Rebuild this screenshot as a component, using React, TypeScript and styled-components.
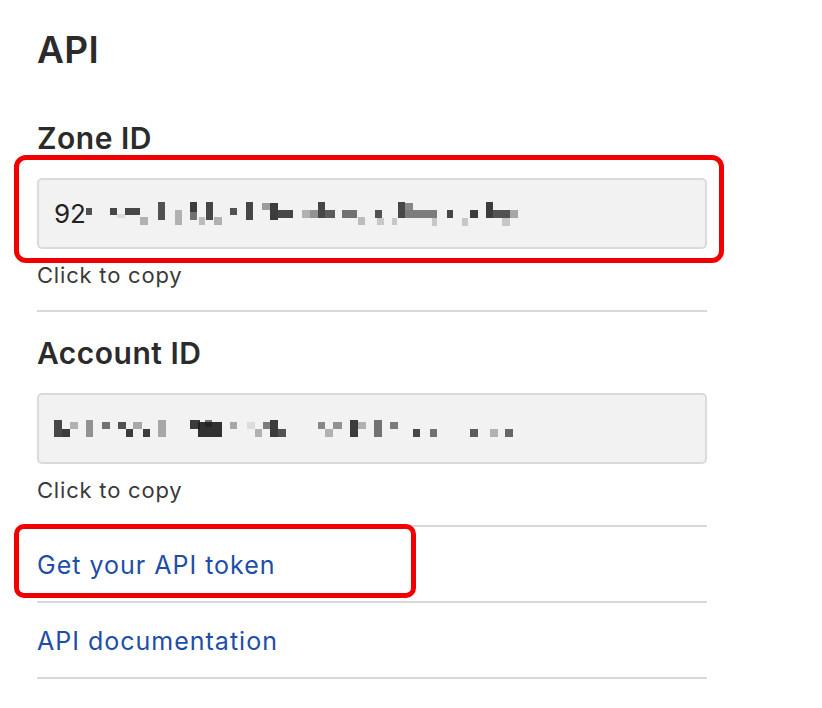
import React from "react";
import styled, { createGlobalStyle } from "styled-components";

const Global = createGlobalStyle`
  html, body { margin: 0; padding: 0; background: #ffffff; }
  body { font-family: Inter, "Noto Sans", "Liberation Sans", sans-serif; color: #2b2b2b; }
  *, *::before, *::after { box-sizing: border-box; }
`;

const Page = styled.main`
  width: 670px;
  margin-left: 37px;
  padding-top: 28px;
  display: flex;
  flex-direction: column;
`;

const Title = styled.h1`
  margin: 0;
  font-size: 37px;
  line-height: 44px;
  font-weight: 600;
  letter-spacing: 0.3px;
  color: #2b2b2b;
`;

const Section = styled.section<{ $first?: boolean }>`
  display: flex;
  flex-direction: column;
  padding-top: ${(p) => (p.$first ? "48px" : "23px")};
  padding-bottom: 21px;
  border-bottom: 2px solid #d8d8d8;
`;

const Label = styled.h2`
  margin: 0 0 22px;
  font-size: 30px;
  line-height: 36px;
  font-weight: 600;
  letter-spacing: 0.5px;
  color: #2b2b2b;
`;

const FieldWrap = styled.div<{ $highlight?: boolean }>`
  position: relative;
  ${(p) =>
    p.$highlight &&
    `
    &::after {
      content: "";
      position: absolute;
      left: -23px;
      right: -17px;
      top: -23px;
      bottom: -14px;
      border: 5px solid #f20000;
      border-radius: 12px;
      pointer-events: none;
    }
  `}
`;

const Field = styled.div`
  height: 71px;
  display: flex;
  align-items: center;
  padding-left: 15px;
  background: #f2f2f2;
  border: 2px solid #dadada;
  border-radius: 5px;
  font-size: 26px;
  color: #222;
  overflow: hidden;
`;

const Value = styled.span`
  line-height: 1;
`;

const Hint = styled.div`
  margin-top: 12px;
  font-size: 22px;
  line-height: 28px;
  letter-spacing: 0.8px;
  color: #3a3a3a;
`;

const LinkList = styled.ul`
  list-style: none;
  margin: 0;
  padding: 0;
  display: flex;
  flex-direction: column;
`;

const LinkItem = styled.li<{ $highlight?: boolean }>`
  position: relative;
  padding: 23px 0 21px;
  border-bottom: 2px solid #d8d8d8;
  ${(p) =>
    p.$highlight &&
    `
    &::after {
      content: "";
      position: absolute;
      left: -23px;
      width: 402px;
      top: -3px;
      bottom: 3px;
      border: 5px solid #f20000;
      border-radius: 10px;
      pointer-events: none;
    }
  `}
`;

const Link = styled.a`
  display: block;
  font-size: 25px;
  line-height: 30px;
  letter-spacing: 1px;
  color: #1d4ea8;
  text-decoration: none;
`;

type Cell = [number, number, number, number, number];

const zoneCells: Cell[] = [
  [86, 208, 6, 7, 0.75],
  [110, 208, 7, 7, 0.8],
  [117, 214, 8, 4, 0.1],
  [125, 208, 15, 7, 0.8],
  [140, 217, 8, 8, 0.3],
  [158, 202, 7, 18, 0.75],
  [175, 210, 7, 15, 0.3],
  [190, 202, 7, 10, 0.85],
  [190, 212, 7, 8, 0.6],
  [199, 217, 6, 8, 0.25],
  [206, 202, 7, 18, 0.8],
  [214, 217, 8, 8, 0.3],
  [230, 208, 7, 7, 0.75],
  [246, 202, 7, 18, 0.8],
  [262, 203, 8, 7, 0.4],
  [270, 203, 8, 17, 0.85],
  [278, 210, 15, 8, 0.8],
  [302, 210, 8, 8, 0.3],
  [310, 210, 8, 8, 0.45],
  [318, 202, 7, 16, 0.8],
  [325, 210, 10, 8, 0.7],
  [342, 210, 15, 8, 0.6],
  [358, 217, 7, 8, 0.25],
  [375, 210, 7, 8, 0.75],
  [377, 218, 7, 7, 0.2],
  [392, 218, 5, 7, 0.2],
  [398, 202, 7, 16, 0.8],
  [405, 203, 8, 7, 0.5],
  [405, 210, 32, 8, 0.55],
  [432, 218, 5, 8, 0.2],
  [447, 210, 6, 8, 0.8],
  [462, 218, 6, 8, 0.2],
  [470, 210, 8, 8, 0.85],
  [486, 202, 7, 16, 0.85],
  [493, 210, 17, 8, 0.75],
  [502, 218, 8, 8, 0.2],
  [510, 210, 8, 8, 0.35],
];

const accountCells: Cell[] = [
  [53, 418, 9, 17, 0.8],
  [62, 427, 8, 8, 0.85],
  [70, 420, 8, 7, 0.3],
  [86, 418, 7, 17, 0.45],
  [102, 420, 8, 7, 0.6],
  [118, 420, 8, 7, 0.75],
  [126, 427, 7, 8, 0.85],
  [133, 420, 9, 7, 0.35],
  [143, 427, 7, 8, 0.85],
  [158, 418, 8, 17, 0.35],
  [190, 418, 10, 9, 0.85],
  [198, 420, 24, 15, 0.9],
  [205, 418, 7, 7, 0.6],
  [230, 420, 7, 7, 0.35],
  [247, 420, 8, 7, 0.1],
  [255, 427, 7, 8, 0.3],
  [263, 420, 7, 7, 0.55],
  [270, 418, 8, 17, 0.85],
  [278, 427, 8, 8, 0.75],
  [318, 420, 7, 7, 0.5],
  [325, 427, 8, 8, 0.3],
  [333, 420, 9, 7, 0.45],
  [350, 418, 8, 17, 0.85],
  [358, 420, 8, 7, 0.3],
  [374, 418, 8, 17, 0.6],
  [390, 420, 8, 7, 0.55],
  [413, 427, 7, 8, 0.8],
  [430, 427, 7, 8, 0.6],
  [470, 427, 8, 8, 0.7],
  [490, 427, 8, 8, 0.3],
  [505, 427, 8, 8, 0.65],
];

const Mosaic: React.FC<{ cells: Cell[]; x: number; y: number; w: number; h: number }> = ({ cells, x, y, w, h }) => (
  <svg width={w} height={h} viewBox={`${x} ${y} ${w} ${h}`} aria-hidden="true" style={{ flex: "none" }}>
    {cells.map(([cx, cy, cw, ch, o], i) => (
      <rect key={i} x={cx} y={cy} width={cw} height={ch} fill="#1c1c1c" fillOpacity={o} />
    ))}
  </svg>
);

export default function App() {
  return (
    <>
      <Global />
      <Page>
        <Title>API</Title>
        <Section $first>
          <Label>Zone ID</Label>
          <FieldWrap $highlight>
            <Field>
              <Value>92</Value>
              <Mosaic cells={zoneCells} x={86} y={199} w={440} h={30} />
            </Field>
          </FieldWrap>
          <Hint>Click to copy</Hint>
        </Section>
        <Section>
          <Label>Account ID</Label>
          <FieldWrap>
            <Field>
              <Mosaic cells={accountCells} x={54} y={412} w={470} h={30} />
            </Field>
          </FieldWrap>
          <Hint>Click to copy</Hint>
        </Section>
        <LinkList>
          <LinkItem $highlight>
            <Link href="#">Get your API token</Link>
          </LinkItem>
          <LinkItem>
            <Link href="#">API documentation</Link>
          </LinkItem>
        </LinkList>
      </Page>
    </>
  );
}
